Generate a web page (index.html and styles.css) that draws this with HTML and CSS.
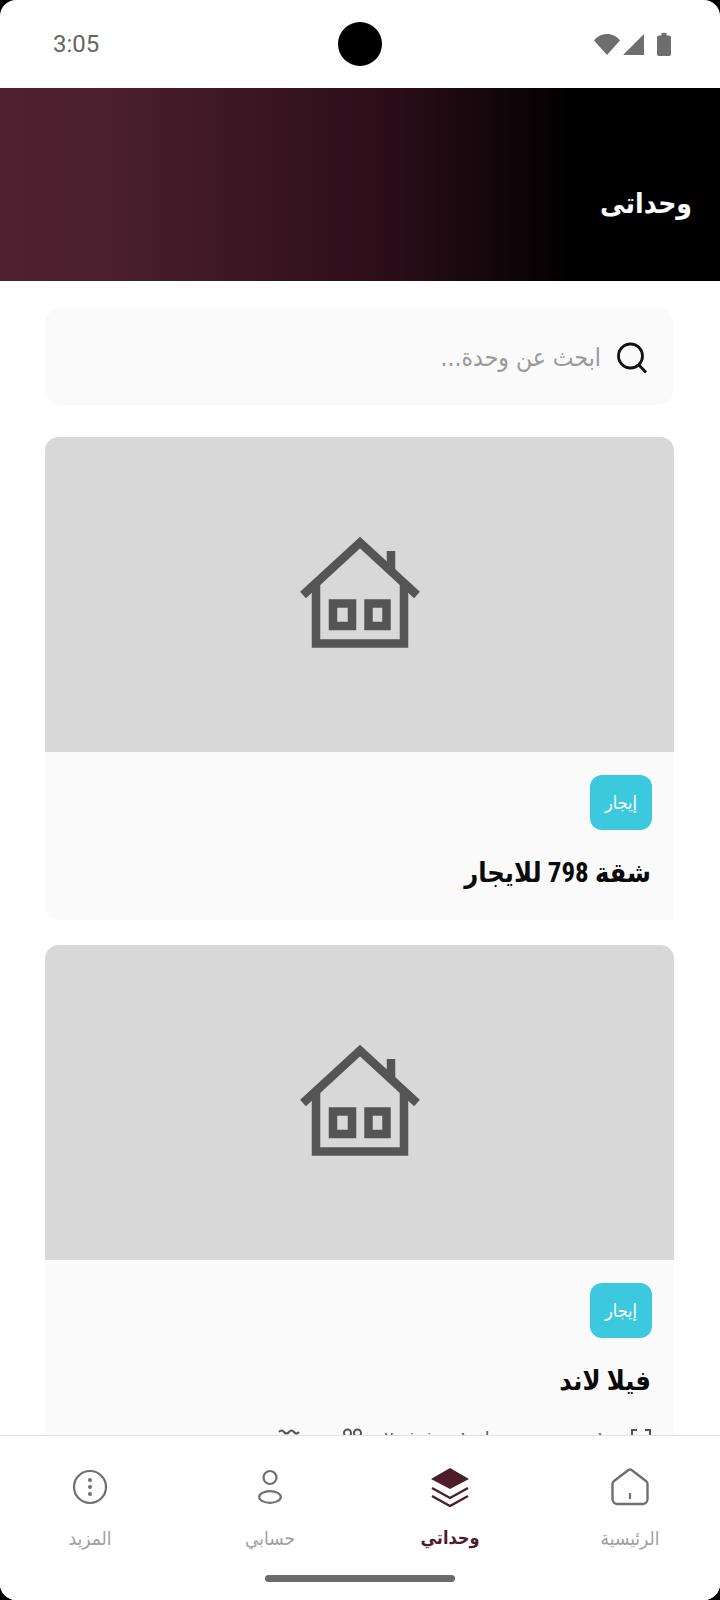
FILE: index.html
```html
<!DOCTYPE html>
<html lang="ar" dir="rtl">
<head>
	<meta charset="UTF-8">
	<title>وحداتي</title>
	<link rel="stylesheet" href="styles.css">
</head>
<body>
	<div class="screen">

		<div class="status-bar" dir="ltr">
			<span class="status-time">3:05</span>
			<span class="status-camera"></span>
			<span class="status-icons">
				<svg width="26" height="21" viewBox="0 0 26 21"><path d="M0 6.500C3 2.500 7.800 0 13 0s10 2.500 13 6.500L13 21z" fill="#6e6e6e"/></svg>
				<svg width="21" height="21" viewBox="0 0 21 21"><path d="M21 0V21H0z" fill="#6e6e6e"/></svg>
				<svg class="status-battery" width="14" height="23" viewBox="0 0 14 23"><path d="M4.500 0h5v2.500H12q2 0 2 2V21q0 2-2 2H2q-2 0-2-2V4.500q0-2 2-2h2.500z" fill="#6e6e6e"/></svg>
			</span>
		</div>

		<div class="page-head">
			<h1>وحداتى</h1>
		</div>

		<div class="content">

			<div class="search">
				<svg width="32" height="32" viewBox="0 0 32 32"><circle cx="14.500" cy="14" r="12" fill="none" stroke="#111" stroke-width="2.800"/><path d="M23 23l7 7.500" stroke="#111" stroke-width="2.800" fill="none"/></svg>
				<span>ابحث عن وحدة...</span>
			</div>

			<div class="card">
				<div class="card-img">
					<svg width="200" height="150" viewBox="0 0 200 150"><use href="#house"/></svg>
				</div>
				<div class="card-info">
					<span class="badge">إيجار</span>
					<h2>شقة 798 للايجار</h2>
				</div>
			</div>

			<div class="card">
				<div class="card-img">
					<svg width="200" height="150" viewBox="0 0 200 150"><use href="#house"/></svg>
				</div>
				<div class="card-info">
					<span class="badge">إيجار</span>
					<h2>فيلا لاند</h2>
					<div class="card-stats">
						<svg width="20" height="20" viewBox="0 0 20 20"><path d="M1 7V1h5M14 1h5v6M1 13v6h5M14 19h5v-6" fill="none" stroke="#555" stroke-width="2"/></svg>
						<span class="stat-area">١٠٠ م</span>
						<span class="stat-bath">حمام ١</span>
						<span class="stat-room">غرفة ٢</span>
						<svg width="19" height="20" viewBox="0 0 19 20"><circle cx="4.500" cy="5" r="3.500" fill="none" stroke="#555" stroke-width="2"/><circle cx="14.500" cy="5" r="3.500" fill="none" stroke="#555" stroke-width="2"/></svg>
						<svg class="stat-wave" width="22" height="20" viewBox="0 0 22 20"><path d="M1 4q2.500-3 5 0t5 0 5 0 5 0" fill="none" stroke="#555" stroke-width="2"/></svg>
					</div>
				</div>
			</div>

		</div>

		<div class="tabs">
			<div class="tab">
				<svg width="40" height="40" viewBox="0 0 40 40"><path d="M18.500 3a2.500 2.500 0 0 1 3 0L36 14q1.500 1 1.500 3V32a5 5 0 0 1-5 5H7.500a5 5 0 0 1-5-5V17q0-2 1.500-3z" fill="none" stroke="#6f6f6f" stroke-width="2.400" stroke-linejoin="round"/><path d="M20 26v6" stroke="#6f6f6f" stroke-width="2.200"/></svg>
				<span>الرئيسية</span>
			</div>
			<div class="tab tab-active">
				<svg width="40" height="40" viewBox="0 0 40 40"><path d="M20 1L39 12 20 22 1 12z" fill="#4d1d2c"/><path d="M2 21l18 10 18-10M2 29l18 10 18-10" fill="none" stroke="#4d1d2c" stroke-width="2.400"/></svg>
				<span>وحداتي</span>
			</div>
			<div class="tab">
				<svg width="40" height="40" viewBox="0 0 40 40"><circle cx="20" cy="10.500" r="6.500" fill="none" stroke="#6f6f6f" stroke-width="2.200"/><ellipse cx="20" cy="30" rx="10.800" ry="5.800" fill="none" stroke="#6f6f6f" stroke-width="2.200"/></svg>
				<span>حسابي</span>
			</div>
			<div class="tab">
				<svg width="40" height="40" viewBox="0 0 40 40"><circle cx="20" cy="20" r="16" fill="none" stroke="#6f6f6f" stroke-width="2.200"/><circle cx="20" cy="13" r="2" fill="#6f6f6f"/><circle cx="20" cy="20" r="2" fill="#6f6f6f"/><circle cx="20" cy="27" r="2" fill="#6f6f6f"/></svg>
				<span>المزيد</span>
			</div>
			<div class="home-bar"></div>
		</div>

	</div>

	<svg class="defs" width="0" height="0">
		<defs>
			<g id="house" fill="none" stroke="#555" stroke-width="8.500">
				<path d="M43 85L100 32.500 157 85"/>
				<path d="M56 72V133.500H144V72"/>
				<path d="M131 41V62"/>
				<rect x="73" y="93.500" width="19" height="22.500"/>
				<rect x="108.500" y="93.500" width="18" height="22.500"/>
			</g>
		</defs>
	</svg>
</body>
</html>
```

FILE: styles.css
```css
html { background: #000 }
body {
	margin: 0;
	font-family: "DejaVu Sans", "Noto Sans", sans-serif;
	font-stretch: condensed;
}
h1, h2 { margin: 0 }
.defs { display: block }

.screen {
	display: flex;
	flex-direction: column;
	height: 1600px;
	overflow: hidden;
	background: #fff;
	border-radius: 16px;
}

/* status bar */
.status-bar {
	position: relative;
	display: flex;
	align-items: center;
	justify-content: space-between;
	flex: none;
	height: 88px;
	padding: 0 49px 0 53px;
	box-sizing: border-box;
}
.status-time {
	font-family: Roboto, sans-serif;
	font-stretch: normal;
	font-size: 24px;
	color: #666;
}
.status-camera {
	position: absolute;
	left: 338px;
	top: 22px;
	width: 44px;
	height: 44px;
	border-radius: 50%;
	background: #000;
}
.status-icons {
	display: flex;
	align-items: center;
	gap: 3px;
}
.status-icons svg { display: block }
.status-battery { margin-left: 10px }

/* title */
.page-head {
	display: flex;
	align-items: center;
	flex: none;
	height: 193px;
	padding: 37px 28px 0 0;
	box-sizing: border-box;
	background: linear-gradient(90deg, #4f2030 0%, #4c1f2e 15%, #2a0d18 55%, #000 80%);
}
.page-head h1 {
	font-size: 28px;
	font-weight: bold;
	color: #fff;
}

/* list */
.content {
	flex: 1;
	min-height: 0;
	overflow: hidden;
	padding: 27px 46px 0 45px;
}
.search {
	display: flex;
	align-items: center;
	gap: 15px;
	height: 97px;
	padding: 2px 26px 0 0;
	box-sizing: border-box;
	background: #fafafa;
	border-radius: 16px;
	font-size: 24.500px;
	color: #999;
}
.card {
	margin-top: 25px;
	background: #fafafa;
	border-radius: 14px 14px 0 14px;
	overflow: hidden;
}
.search + .card { margin-top: 32px }
.card-img {
	display: flex;
	align-items: center;
	justify-content: center;
	height: 315px;
	background: #d8d8d8;
}
.card-img svg { margin-bottom: 20px }
.card-info {
	min-height: 168px;
	padding: 23px 22px 0 0;
	box-sizing: border-box;
}
.badge {
	display: flex;
	align-items: center;
	justify-content: center;
	width: 62px;
	height: 55px;
	background: #3cc9dd;
	border-radius: 12px;
	font-size: 18px;
	color: #fff;
}
.card-info h2 {
	margin: 23px 1px 0 0;
	font-family: Roboto, "DejaVu Sans", sans-serif;
	font-size: 27px;
	line-height: 40px;
	color: #0a0a0a;
}
.card-stats {
	display: flex;
	align-items: flex-start;
	margin-top: 27px;
	padding: 0 1px 20px 0;
	font-size: 19px;
	line-height: 20px;
	color: #555;
}
.stat-area { margin-right: 7px }
.stat-bath { margin-right: 70px }
.stat-room { margin-right: 25px }
.card-stats svg { margin-right: 22px; flex: none }
.card-stats svg:first-child { margin-right: 0; margin-top: 1px }
.card-stats .stat-wave { margin-right: 43px }

/* bottom tabs */
.tabs {
	position: relative;
	display: grid;
	grid-template-columns: repeat(4, 1fr);
	flex: none;
	height: 165px;
	padding-top: 31px;
	box-sizing: border-box;
	background: #fff;
	border-top: 1px solid #e4e4e4;
}
.tab {
	display: flex;
	flex-direction: column;
	align-items: center;
	gap: 17px;
	font-size: 19px;
	line-height: 28px;
	color: #a0a0a0;
}
.tab-active {
	font-size: 18px;
	font-weight: bold;
	color: #4d1d2c;
}
.home-bar {
	position: absolute;
	left: 265px;
	bottom: 18px;
	width: 190px;
	height: 7px;
	background: #6b6b6b;
	border-radius: 4px;
}
```
